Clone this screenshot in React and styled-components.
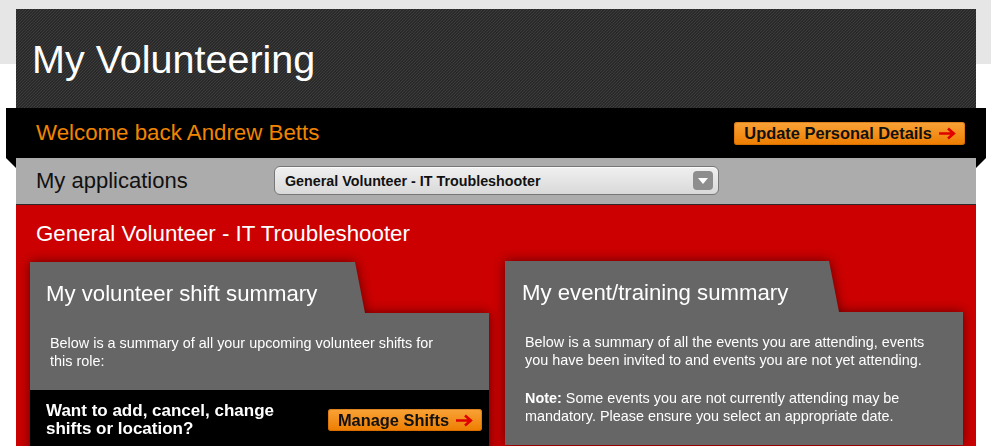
import React from "react";
import styled, { createGlobalStyle } from "styled-components";

const Global = createGlobalStyle`
  html, body { margin: 0; padding: 0; }
  body {
    background: linear-gradient(#e6e6e6 0, #e6e6e6 64px, #ffffff 64px);
    font-family: "Liberation Sans", Arial, sans-serif;
    color: #fff;
  }
`;

const Page = styled.div`
  width: 960px;
  padding: 9px 0 0 16px;
`;

const Masthead = styled.header`
  height: 99px;
  box-sizing: border-box;
  padding: 28px 16px 0;
  background-color: #2c2c2c;
  background-image: repeating-linear-gradient(
    135deg,
    #2a2a2a 0px,
    #2a2a2a 1.4142px,
    #3c3c3c 1.4142px,
    #3c3c3c 2.1213px
  );
`;

const SiteTitle = styled.h1`
  margin: 0;
  font-size: 39.5px;
  line-height: 45px;
  font-weight: normal;
  color: #fff;
`;

const Ribbon = styled.div`
  position: relative;
  margin: 0 -10px;
  height: 50px;
  background: #000;
  display: flex;
  align-items: center;
  justify-content: space-between;
  padding: 0 21px 0 30px;

  &::before,
  &::after {
    content: "";
    position: absolute;
    top: 50px;
    width: 10px;
    height: 10px;
    background: #000;
  }
  &::before {
    left: 0;
    clip-path: polygon(0 0, 100% 0, 100% 100%);
  }
  &::after {
    right: 0;
    clip-path: polygon(0 0, 100% 0, 0 100%);
  }
`;

const Welcome = styled.div`
  font-size: 22.3px;
  line-height: 26px;
  color: #f28500;
`;

const OrangeButton = styled.button`
  display: inline-flex;
  align-items: center;
  gap: 6px;
  height: ${(p) => p.$h || 23}px;
  box-sizing: border-box;
  padding: 0 9px 0 10px;
  border: none;
  border-radius: 3px;
  background: linear-gradient(#f8a338, #ee7d00);
  box-shadow: inset 0 0 0 1px rgba(190, 90, 0, 0.45);
  font-family: "Liberation Sans", Arial, sans-serif;
  font-weight: bold;
  font-size: 16.4px;
  color: #111;
  cursor: pointer;
  white-space: nowrap;
`;

const Arrow = () => (
  <svg width="18" height="13" viewBox="0 0 18 13">
    <path
      d="M1 6.5 H15.5 M10 1.5 L15.8 6.5 L10 11.5"
      fill="none"
      stroke="#e00000"
      strokeWidth="2.6"
    />
  </svg>
);

const AppBar = styled.div`
  height: 46px;
  background: #acacac;
  border-bottom: 1px solid #2a2a2a;
  display: flex;
  align-items: center;
  padding: 0 0 0 20px;
`;

const AppLabel = styled.div`
  width: 238px;
  font-size: 22px;
  line-height: 26px;
  color: #111;
`;

const Select = styled.div`
  width: 445px;
  height: 29px;
  box-sizing: border-box;
  border: 1px solid #777;
  border-radius: 6px;
  background: linear-gradient(#f0f0f0, #d9d9d9);
  box-shadow: inset 0 1px 1px rgba(255, 255, 255, 0.8);
  display: flex;
  align-items: center;
  justify-content: space-between;
  padding: 0 5px 0 10px;
  margin-top: -1px;
  font-size: 14.3px;
  font-weight: bold;
  color: #111;
`;

const SelectArrow = styled.span`
  width: 20px;
  height: 19px;
  border-radius: 4px;
  background: #8e8e8e;
  display: flex;
  align-items: center;
  justify-content: center;
  &::after {
    content: "";
    width: 0;
    height: 0;
    border-left: 5px solid transparent;
    border-right: 5px solid transparent;
    border-top: 6px solid #fff;
    margin-top: 1px;
  }
`;

const RedArea = styled.section`
  background: #cc0000;
  padding: 16px 13px 40px 14px;
  min-height: 300px;
`;

const RoleTitle = styled.h2`
  margin: 0 0 14px 6px;
  font-size: 22.3px;
  line-height: 26px;
  font-weight: normal;
  color: #fff;
`;

const Cards = styled.div`
  display: grid;
  grid-template-columns: 459px 458px;
  column-gap: 16px;
  align-items: start;
`;

const Card = styled.div`
  filter: drop-shadow(0 0 6px rgba(60, 0, 0, 0.75));
  margin-top: ${(p) => p.$offset || 0}px;
`;

const Tab = styled.div`
  width: ${(p) => p.$w}px;
  height: 51px;
  box-sizing: border-box;
  padding: 19px 0 0 ${(p) => p.$pl || 16}px;
  background: #666;
  clip-path: polygon(0 0, calc(100% - 10px) 0, 100% 100%, 0 100%);
`;

const CardTitle = styled.h3`
  margin: 0;
  font-size: 22.2px;
  line-height: 26px;
  font-weight: normal;
  color: #fff;
`;

const CardBody = styled.div`
  background: #666;
  padding: 21px ${(p) => p.$pr || 40}px 20px 20px;
  font-size: 14.4px;
  line-height: 18px;
  color: #fff;

  p {
    margin: 0 0 20px;
  }
  p:last-child {
    margin-bottom: 0;
  }
`;

const ActionStrip = styled.div`
  background: #000;
  display: flex;
  align-items: center;
  justify-content: space-between;
  padding: 12px 7px 14px 16px;
`;

const ActionText = styled.div`
  font-size: 17px;
  line-height: 18px;
  font-weight: bold;
  color: #fff;
  width: 240px;
`;

export default function App() {
  return (
    <>
      <Global />
      <Page>
        <Masthead>
          <SiteTitle>My Volunteering</SiteTitle>
        </Masthead>
        <Ribbon>
          <Welcome>Welcome back Andrew Betts</Welcome>
          <OrangeButton>
            Update Personal Details
            <Arrow />
          </OrangeButton>
        </Ribbon>
        <AppBar>
          <AppLabel>My applications</AppLabel>
          <Select>
            <span>General Volunteer - IT Troubleshooter</span>
            <SelectArrow />
          </Select>
        </AppBar>
        <RedArea>
          <RoleTitle>General Volunteer - IT Troubleshooter</RoleTitle>
          <Cards>
            <Card $offset={1}>
              <Tab $w={335}>
                <CardTitle>My volunteer shift summary</CardTitle>
              </Tab>
              <CardBody $pr={40}>
                <p>
                  Below is a summary of all your upcoming volunteer shifts for
                  this role:
                </p>
              </CardBody>
              <ActionStrip>
                <ActionText>Want to add, cancel, change shifts or location?</ActionText>
                <OrangeButton $h={22}>
                  Manage Shifts
                  <Arrow />
                </OrangeButton>
              </ActionStrip>
            </Card>
            <Card>
              <Tab $w={334} $pl={17}>
                <CardTitle>My event/training summary</CardTitle>
              </Tab>
              <CardBody $pr={24}>
                <p>
                  Below is a summary of all the events you are attending, events
                  you have been invited to and events you are not yet attending.
                </p>
                <p>
                  <b>Note:</b> Some events you are not currently attending may be
                  mandatory. Please ensure you select an appropriate date.
                </p>
              </CardBody>
            </Card>
          </Cards>
        </RedArea>
      </Page>
    </>
  );
}
